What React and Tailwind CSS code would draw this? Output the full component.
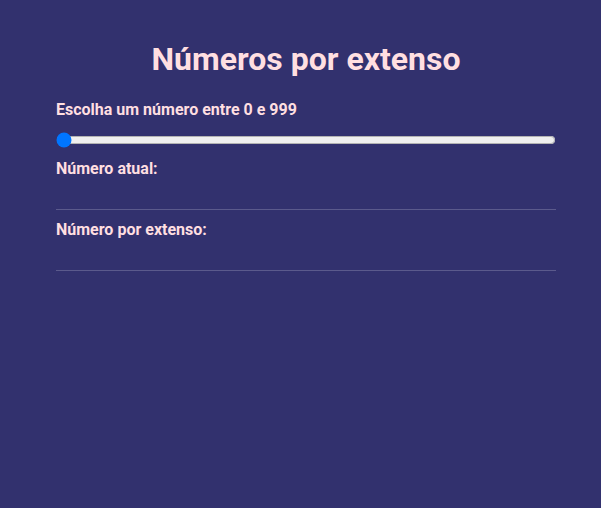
export default function App() {
  return (
    <div className="min-h-[508px] w-full bg-[#32316e] font-['Roboto',sans-serif] text-[#ffdfe1]">
      <div className="ml-[56px] w-[500px] pt-[39px]">
        <h1 className="text-center text-[32px] font-bold leading-[40px]">Números por extenso</h1>
        <label className="mt-[19px] block text-[16px] font-bold leading-[24px]">Escolha um número entre 0 e 999</label>
        <div className="mt-[10px] flex h-[16px] items-center">
          <input type="range" min="0" max="999" defaultValue="0" className="m-0 w-full" />
        </div>
        <p className="mt-[9px] text-[16px] font-bold leading-[24px]">Número atual:</p>
        <div className="h-[28px]" />
        <hr className="border-t border-[#5b5a8c]" />
        <p className="mt-[8px] text-[16px] font-bold leading-[24px]">Número por extenso:</p>
        <div className="h-[28px]" />
        <hr className="border-t border-[#5b5a8c]" />
      </div>
    </div>
  )
}
